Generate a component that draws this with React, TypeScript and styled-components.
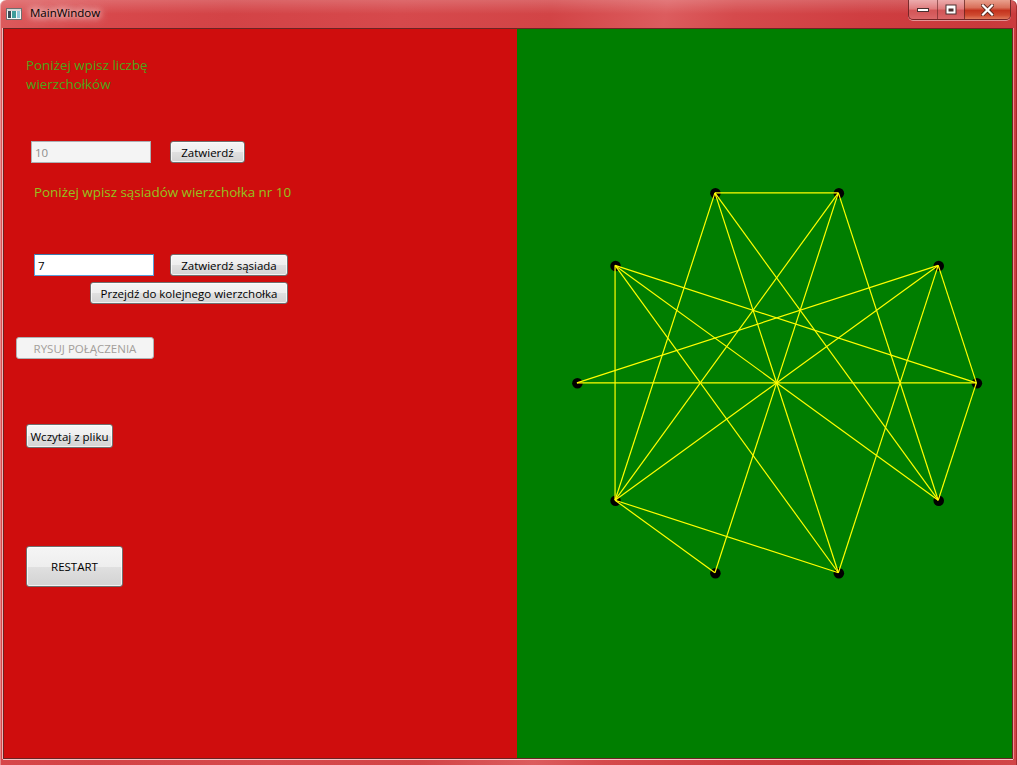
import React from 'react';
import styled, { createGlobalStyle } from 'styled-components';

const Global = createGlobalStyle`
  html, body { margin: 0; padding: 0; background: #ffffff; }
  body { font-family: "Open Sans", "Noto Sans", "DejaVu Sans", sans-serif; }
  #root { width: 1017px; height: 765px; }
`;

const Window = styled.div`
  width: 1017px;
  height: 765px;
  box-sizing: border-box;
  display: flex;
  flex-direction: column;
  padding: 0 4px 6px 3px;
  background:
    linear-gradient(180deg, rgba(255,255,255,0.18) 0px, rgba(255,255,255,0) 14px),
    linear-gradient(100deg,
      #dc5b5d 0%, #d8494c 8%, #d34346 20%, #d6494c 35%, #d24446 48%,
      #dc5c5e 58%, #d54a4c 64%, #cf3e41 75%, #c9393b 86%, #d24648 100%);
  border-radius: 6px 6px 0 0;
  box-shadow: inset 1px 0 0 rgba(255,255,255,0.35), inset -1px 0 0 rgba(120,20,20,0.5);
  overflow: hidden;
`;

const TitleBar = styled.div`
  height: 28px;
  flex: none;
  display: flex;
  align-items: flex-start;
`;

const TitleIcon = styled.svg`
  width: 16px;
  height: 12px;
  margin: 8px 0 0 3px;
  flex: none;
`;

const TitleText = styled.span`
  margin: 5px 0 0 8px;
  font-family: "Open Sans", "Noto Sans", sans-serif;
  font-size: 11.5px;
  line-height: 16px;
  color: #000;
  text-shadow: 0 0 6px rgba(255,255,255,0.95), 0 0 10px rgba(255,255,255,0.8), 0 0 14px rgba(255,255,255,0.6);
`;

const Controls = styled.div`
  margin-left: auto;
  margin-right: 2px;
  display: flex;
  height: 19px;
  border: 1px solid rgba(90,30,30,0.75);
  border-top: none;
  border-radius: 0 0 5px 5px;
  overflow: hidden;
  box-shadow: 0 1px 0 rgba(255,255,255,0.45);
`;

const CtrlButton = styled.div<{ $w: number; $close?: boolean }>`
  width: ${p => p.$w}px;
  height: 100%;
  display: flex;
  align-items: center;
  justify-content: center;
  box-sizing: border-box;
  border-left: ${p => (p.$close ? '1px solid rgba(90,30,30,0.7)' : 'none')};
  border-right: ${p => (p.$close ? 'none' : '1px solid rgba(90,30,30,0.55)')};
  background: ${p =>
    p.$close
      ? 'linear-gradient(180deg, #e9a08e 0%, #d9705a 40%, #c4331e 55%, #cf4a30 80%, #e07a5c 100%)'
      : 'linear-gradient(180deg, rgba(255,235,235,0.55) 0%, rgba(245,190,190,0.45) 45%, rgba(220,120,120,0.35) 55%, rgba(235,160,160,0.45) 100%)'};
  &:nth-child(2) { border-right: none; }
`;

const Content = styled.div`
  flex: 1;
  display: flex;
  border: 1px solid #6a2424;
  box-shadow: 0 1px 0 rgba(255,225,225,0.8), -1px 0 0 rgba(255,225,225,0.7), 1px 0 0 rgba(255,225,225,0.5);
  min-height: 0;
`;

const LeftPanel = styled.div`
  width: 513px;
  flex: none;
  background: #cf0d0d;
  display: flex;
  flex-direction: column;
  align-items: flex-start;
`;

const RightPanel = styled.div`
  flex: 1;
  background: #007e00;
  display: flex;
`;

const Label = styled.div<{ $color: string; $top: number; $left: number }>`
  margin: ${p => p.$top}px 0 0 ${p => p.$left}px;
  font-family: "Open Sans", "Noto Sans", sans-serif;
  font-size: 13.4px;
  line-height: 19px;
  color: ${p => p.$color};
  white-space: nowrap;
`;

const Row = styled.div<{ $top: number; $left: number; $gap: number }>`
  margin: ${p => p.$top}px 0 0 ${p => p.$left}px;
  display: flex;
  align-items: flex-start;
  gap: ${p => p.$gap}px;
`;

const TextBox = styled.div<{ $disabled?: boolean; $focused?: boolean }>`
  width: 120px;
  height: 22px;
  box-sizing: border-box;
  padding: 0 3px;
  display: flex;
  align-items: center;
  font-family: "Open Sans", "Noto Sans", sans-serif;
  font-size: 11.5px;
  background: ${p => (p.$disabled ? '#f4f4f4' : '#ffffff')};
  color: ${p => (p.$disabled ? '#8d8d8d' : '#000000')};
  border: 1px solid ${p => (p.$focused ? '#5a9fd9' : '#adb2b5')};
  border-top-color: ${p => (p.$focused ? '#3d7bad' : '#abadb3')};
`;

const Button = styled.div<{ $w: number; $h: number; $top?: number; $left?: number; $disabled?: boolean }>`
  width: ${p => p.$w}px;
  height: ${p => p.$h}px;
  margin: ${p => p.$top ?? 0}px 0 0 ${p => p.$left ?? 0}px;
  box-sizing: border-box;
  display: flex;
  align-items: center;
  justify-content: center;
  font-family: "Open Sans", "Noto Sans", sans-serif;
  font-size: 11.5px;
  white-space: nowrap;
  border-radius: 3px;
  border: 1px solid ${p => (p.$disabled ? '#adb2b5' : '#707070')};
  color: ${p => (p.$disabled ? '#a39e9a' : '#000000')};
  background: ${p =>
    p.$disabled
      ? '#f4f4f4'
      : 'linear-gradient(180deg, #f5f5f5 0%, #eeeeee 50%, #e0e0e0 51%, #d3d3d3 100%)'};
  box-shadow: ${p => (p.$disabled ? 'none' : 'inset 0 0 0 1px rgba(255,255,255,0.7)')};
  flex: none;
`;

const GraphSvg = styled.svg`
  width: 100%;
  height: 100%;
  display: block;
`;

const cx = 777;
const cy = 383.3;
const r = 200;
const verts = Array.from({ length: 10 }, (_, k) => {
  const a = (k * 36 * Math.PI) / 180;
  return { x: cx + r * Math.cos(a), y: cy + r * Math.sin(a) };
});

const edges: [number, number][] = [
  [7, 8], [7, 4], [7, 2], [7, 1],
  [8, 4], [8, 3], [8, 1],
  [6, 0], [6, 1], [6, 2], [6, 4],
  [9, 5], [9, 4], [9, 2], [9, 0],
  [0, 1], [0, 5], [4, 3], [4, 2],
];

export default function App() {
  return (
    <>
      <Global />
      <Window>
        <TitleBar>
          <TitleIcon viewBox="0 0 16 12">
            <rect x="0.5" y="0.5" width="15" height="11" fill="#f4f4f4" stroke="#6e6e6e" />
            <rect x="1" y="1" width="14" height="2" fill="#d8d8d8" />
            <rect x="2" y="3" width="3" height="7" fill="#3d4a55" />
            <rect x="6" y="3" width="4" height="7" fill="#3f9c9a" />
            <rect x="11" y="3" width="3" height="7" fill="#8fc7d8" />
          </TitleIcon>
          <TitleText>MainWindow</TitleText>
          <Controls>
            <CtrlButton $w={29}>
              <svg width="14" height="6" viewBox="0 0 14 6">
                <rect x="1.5" y="1.5" width="11" height="3" fill="#ffffff" stroke="#4a3030" strokeWidth="1" />
              </svg>
            </CtrlButton>
            <CtrlButton $w={26}>
              <svg width="12" height="11" viewBox="0 0 12 11">
                <rect x="0.5" y="0.5" width="11" height="10" fill="#4a3030" />
                <rect x="1.5" y="1.5" width="9" height="8" fill="#ffffff" />
                <rect x="3.5" y="4.5" width="5" height="3" fill="#4a3030" />
              </svg>
            </CtrlButton>
            <CtrlButton $w={46} $close>
              <svg width="13" height="12" viewBox="0 0 13 12">
                <path d="M2 1.5 L11 10.5 M11 1.5 L2 10.5" stroke="#5a2a20" strokeWidth="4" strokeLinecap="square" />
                <path d="M2 1.5 L11 10.5 M11 1.5 L2 10.5" stroke="#ffffff" strokeWidth="2.2" strokeLinecap="square" />
              </svg>
            </CtrlButton>
          </Controls>
        </TitleBar>
        <Content>
          <LeftPanel>
            <Label $color="#4aa61a" $top={27} $left={22}>
              Poniżej wpisz liczbę
              <br />
              wierzchołków
            </Label>
            <Row $top={47} $left={27} $gap={19}>
              <TextBox $disabled>10</TextBox>
              <Button $w={75} $h={22}>Zatwierdź</Button>
            </Row>
            <Label $color="#93c21f" $top={20} $left={30}>
              Poniżej wpisz sąsiadów wierzchołka nr 10
            </Label>
            <Row $top={52} $left={30} $gap={16}>
              <TextBox $focused>7</TextBox>
              <Button $w={118} $h={22}>Zatwierdź sąsiada</Button>
            </Row>
            <Button $w={198} $h={22} $top={6} $left={86}>Przejdź do kolejnego wierzchołka</Button>
            <Button $w={138} $h={22} $top={33} $left={12} $disabled>RYSUJ POŁĄCZENIA</Button>
            <Button $w={87} $h={24} $top={65} $left={22}>Wczytaj z pliku</Button>
            <Button $w={97} $h={41} $top={98} $left={22}>RESTART</Button>
          </LeftPanel>
          <RightPanel>
            <GraphSvg viewBox="517 29 495 730" preserveAspectRatio="xMinYMin meet">
              {verts.map((v, i) => (
                <circle key={i} cx={v.x + 0.5} cy={v.y + 0.5} r={5.3} fill="#000000" />
              ))}
              {edges.map(([a, b], i) => (
                <line
                  key={i}
                  x1={verts[a].x}
                  y1={verts[a].y}
                  x2={verts[b].x}
                  y2={verts[b].y}
                  stroke="#ffff00"
                  strokeWidth={1.2}
                />
              ))}
            </GraphSvg>
          </RightPanel>
        </Content>
      </Window>
    </>
  );
}
